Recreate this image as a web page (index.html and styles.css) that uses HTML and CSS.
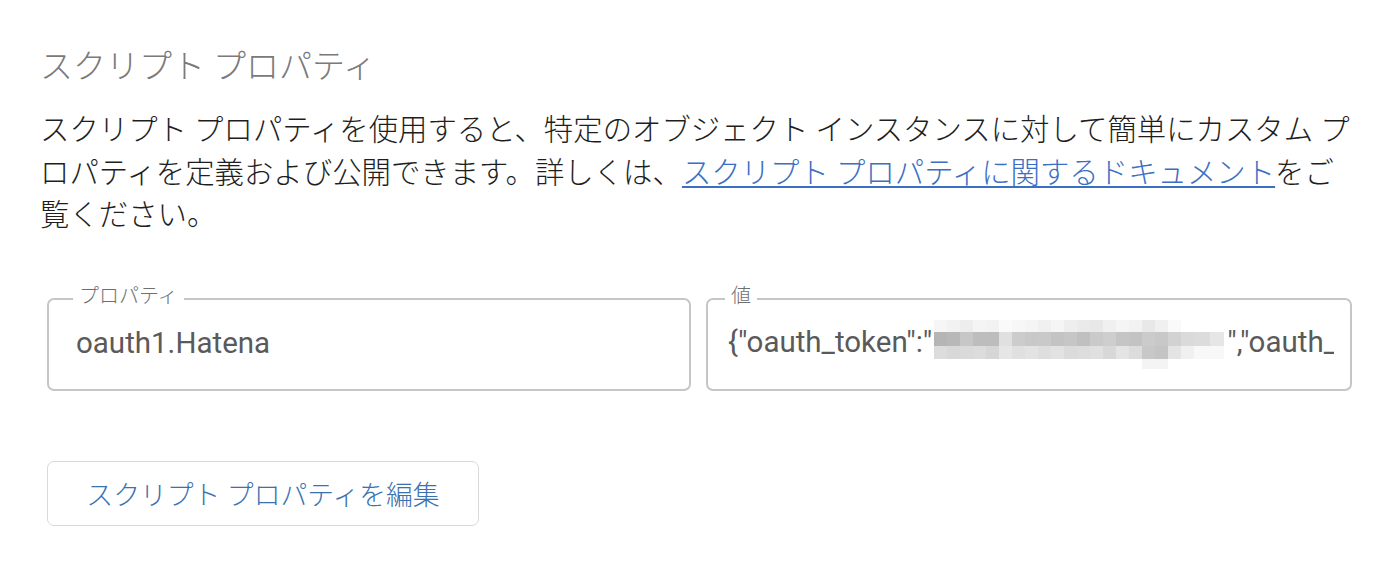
FILE: index.html
```html
<!DOCTYPE html>
<html lang="ja">
<head>
<meta charset="utf-8">
<title>スクリプト プロパティ</title>
<link rel="stylesheet" href="styles.css">
</head>
<body>
<main class="page">
  <h2 class="title">スクリプト プロパティ</h2>
  <p class="desc">スクリプト プロパティを使用すると、特定のオブジェクト インスタンスに対して簡単にカスタム プロパティを定義および公開できます。詳しくは、<a class="link" href="#">スクリプト プロパティに関するドキュメント</a>をご覧ください。</p>
  <div class="fields">
    <div class="field">
      <span class="field-label">プロパティ</span>
      <div class="field-value">oauth1.Hatena</div>
    </div>
    <div class="field field-wide">
      <span class="field-label">値</span>
      <div class="field-value">{"oauth_token":"<span class="redact"><span class="rr r1"></span><span class="rr r2"></span><span class="rr r3"></span><span class="rr r4"></span></span>","oauth_token_secret":"xxxxxxxx"}</div>
    </div>
  </div>
  <button class="edit-btn" type="button">スクリプト プロパティを編集</button>
</main>
</body>
</html>
```
FILE: styles.css
```css
html, body {
  margin: 0;
  padding: 0;
  background: #ffffff;
}

body {
  font-family: Roboto, "Noto Sans CJK JP", sans-serif;
  color: #222222;
}

.page {
  padding: 47px 0 0 40px;
}

.title {
  margin: 0;
  font-size: 33px;
  line-height: 40px;
  font-weight: 300;
  color: #7a7a7a;
}

.desc {
  margin: 22px 0 0 0;
  width: 1322px;
  font-size: 29.4px;
  line-height: 42.5px;
  font-weight: 300;
  color: #1e1e1e;
}

.link {
  color: #3b6fc4;
  text-decoration: underline;
  text-underline-offset: 3px;
  text-decoration-thickness: 2px;
}

.fields {
  display: grid;
  grid-template-columns: 644px 646px;
  gap: 15px;
  margin: 61px 0 0 7px;
}

.field {
  position: relative;
  height: 93px;
  box-sizing: border-box;
  border: 2px solid #c6c6c6;
  border-radius: 7px;
  display: flex;
  align-items: center;
  padding: 0 16px 2px 27px;
}

.field-wide {
  padding-left: 20px;
}

.field-label {
  position: absolute;
  top: -15px;
  left: 24px;
  padding: 0 6px;
  background: #ffffff;
  font-size: 20px;
  line-height: 22px;
  font-weight: 300;
  color: #6f6f6f;
}

.field-wide .field-label {
  left: 17px;
}

.field-value {
  font-size: 29.5px;
  line-height: 50px;
  color: #5a5a5a;
  white-space: nowrap;
  overflow: hidden;
}

.redact {
  display: inline-flex;
  flex-direction: column;
  width: 290px;
  height: 49px;
  vertical-align: middle;
  margin: 0 3px 0 2px;
}

.rr {
  display: block;
  width: 100%;
}

.r1 {
  height: 12px;
  background: linear-gradient(90deg,
    #f6f6f6 0 13px, #f2f2f2 13px 26px, #ededed 26px 39px, #f4f4f4 39px 52px,
    #f2f2f2 52px 65px, #fafafa 65px 78px, #f7f7f7 78px 91px, #f5f5f5 91px 104px,
    #f0f0f0 104px 117px, #f5f5f5 117px 130px, #eeeeee 130px 143px, #eaeaea 143px 156px,
    #e8e8e8 156px 169px, #f0f0f0 169px 182px, #f5f5f5 182px 195px, #f2f2f2 195px 208px,
    #e8e8e8 208px 221px, #f0f0f0 221px 234px, #fafafa 234px 247px, #ffffff 247px 290px);
}

.r2 {
  height: 14px;
  background: linear-gradient(90deg,
    #b5b5b5 0 13px, #b8b8b8 13px 26px, #c7c7c7 26px 39px, #bdbdbd 39px 52px,
    #bdbdbd 52px 65px, #e0e0e0 65px 78px, #cccccc 78px 91px, #c8c8c8 91px 104px,
    #c9c9c9 104px 117px, #c3c3c3 117px 130px, #c6c6c6 130px 143px, #c0c0c0 143px 156px,
    #cacaca 156px 169px, #cecece 169px 182px, #c5c5c5 182px 195px, #c3c3c3 195px 208px,
    #cbcbcb 208px 221px, #c8c8c8 221px 234px, #d2d2d2 234px 247px, #dadada 247px 260px,
    #dcdcdc 260px 276px, #e6e6e6 276px 290px);
}

.r3 {
  height: 13px;
  background: linear-gradient(90deg,
    #dcdcdc 0 13px, #d8d8d8 13px 26px, #dadada 26px 39px, #dcdcdc 39px 52px,
    #d6d6d6 52px 65px, #e6e6e6 65px 78px, #e0e0e0 78px 91px, #e3e3e3 91px 104px,
    #dedede 104px 117px, #e2e2e2 117px 130px, #dbdbdb 130px 143px, #dddddd 143px 156px,
    #e0e0e0 156px 169px, #d8d8d8 169px 182px, #e4e4e4 182px 195px, #dcdcdc 195px 208px,
    #c8c8c8 208px 221px, #c4c4c4 221px 234px, #e4e4e4 234px 247px, #f0f0f0 247px 260px,
    #f8f8f8 260px 290px);
}

.r4 {
  height: 10px;
  background: linear-gradient(90deg,
    #ffffff 0 208px, #f4f4f4 208px 234px, #ffffff 234px 290px);
}

.edit-btn {
  display: flex;
  align-items: center;
  justify-content: center;
  margin: 70px 0 0 7px;
  width: 432px;
  height: 65px;
  box-sizing: border-box;
  border: 1.5px solid #d9d9d9;
  border-radius: 7px;
  background: #ffffff;
  font-family: Roboto, "Noto Sans CJK JP", sans-serif;
  font-size: 26.8px;
  font-weight: 300;
  color: #3a72b0;
  padding: 0;
  cursor: pointer;
}
```
